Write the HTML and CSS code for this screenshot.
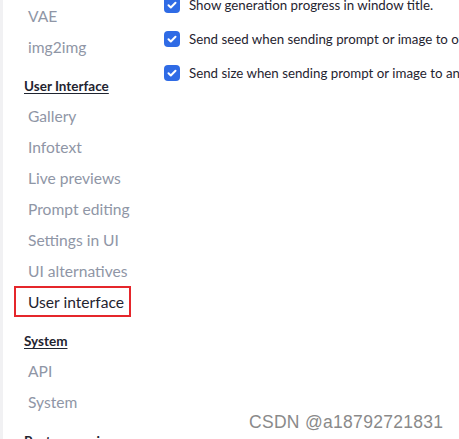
FILE: index.html
```html
<!DOCTYPE html>
<html>
<head>
<meta charset="utf-8">
<link rel="stylesheet" href="styles.css">
</head>
<body>
<div class="page">
  <nav class="sidebar">
    <a class="item">VAE</a>
    <a class="item">img2img</a>
    <div class="heading">User Interface</div>
    <a class="item">Gallery</a>
    <a class="item">Infotext</a>
    <a class="item">Live previews</a>
    <a class="item">Prompt editing</a>
    <a class="item">Settings in UI</a>
    <a class="item">UI alternatives</a>
    <a class="item active">User interface</a>
    <div class="heading">System</div>
    <a class="item">API</a>
    <a class="item">System</a>
    <div class="heading">Postprocessing</div>
  </nav>
  <main class="content">
    <label class="row"><span class="check"><svg viewBox="0 0 16 16" width="16" height="16"><path d="M4.5 8.3l2.3 2.2 4.7-4.8" fill="none" stroke="#fff" stroke-width="2" stroke-linecap="round" stroke-linejoin="round"/></svg></span><span class="label">Show generation progress in window title.</span></label>
    <label class="row"><span class="check"><svg viewBox="0 0 16 16" width="16" height="16"><path d="M4.5 8.3l2.3 2.2 4.7-4.8" fill="none" stroke="#fff" stroke-width="2" stroke-linecap="round" stroke-linejoin="round"/></svg></span><span class="label">Send seed when sending prompt or image to other interface</span></label>
    <label class="row"><span class="check"><svg viewBox="0 0 16 16" width="16" height="16"><path d="M4.5 8.3l2.3 2.2 4.7-4.8" fill="none" stroke="#fff" stroke-width="2" stroke-linecap="round" stroke-linejoin="round"/></svg></span><span class="label">Send size when sending prompt or image to another interface</span></label>
  </main>
</div>
<div class="watermark">CSDN @a18792721831</div>
</body>
</html>
```
FILE: styles.css
```css
html, body {
  margin: 0;
  padding: 0;
  background: #fff;
  overflow: hidden;
}
body {
  width: 459px;
  height: 439px;
  position: relative;
  font-family: Lato, "Noto Sans", sans-serif;
}
.page {
  display: flex;
  height: 439px;
  overflow: hidden;
}
.sidebar {
  width: 148px;
  flex: none;
  display: flex;
  flex-direction: column;
  padding-left: 11px;
  border-left: 3px solid #f1f1f3;
  box-sizing: border-box;
}
.item {
  flex: none;
  display: flex;
  align-items: center;
  height: 31px;
  width: 117px;
  box-sizing: border-box;
  padding-left: 14px;
  font-size: 15.6px;
  color: #8f96a6;
  white-space: nowrap;
}
.item.active {
  color: #1f2430;
  border: 2px solid #e5262b;
  padding-left: 12px;
}
.heading {
  flex: none;
  margin: 16px 0 6px 10px;
  height: 16px;
  line-height: 16px;
  font-size: 13.5px;
  font-weight: 700;
  color: #1f2430;
  text-decoration: underline;
  text-underline-offset: 2px;
  white-space: nowrap;
}
.content {
  flex: 1;
  display: flex;
  flex-direction: column;
  gap: 14px;
  padding-left: 16px;
  margin-top: -5px;
  min-width: 0;
  overflow: hidden;
}
.row {
  flex: none;
  display: flex;
  align-items: center;
  gap: 9px;
  height: 20px;
  white-space: nowrap;
}
.check {
  flex: none;
  width: 16px;
  height: 16px;
  border-radius: 4px;
  background: #2f6be5;
  display: flex;
}
.label {
  font-size: 13.3px;
  color: #1f2430;
}
.watermark {
  position: absolute;
  left: 249px;
  top: 412px;
  font-family: "Liberation Sans", Arial, sans-serif;
  font-size: 17.5px;
  color: #8a8a8a;
  letter-spacing: 0.3px;
}
```
